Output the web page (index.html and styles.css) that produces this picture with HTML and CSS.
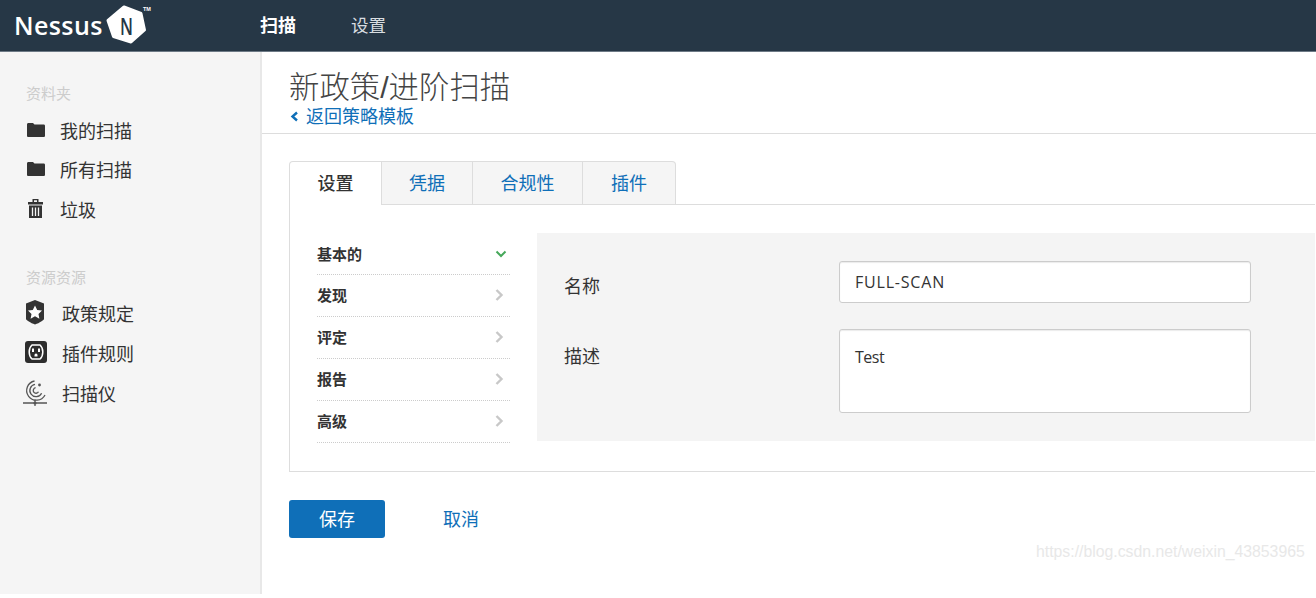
FILE: index.html
```html
<!DOCTYPE html>
<html>
  <head>
    <title>Nessus</title>
    <link rel="stylesheet" href="styles.css">
  </head>
  <body>
    <header class="topbar">
      <div class="brand">
        <span class="brand-name">Nessus</span>
        <svg class="brand-logo" width="44" height="46" viewBox="0 0 44 46">
          <polygon points="21,5 38,11.5 41.5,28 28,40 10.5,34.5 5,18.5" fill="#fff" stroke="#fff" stroke-width="3" stroke-linejoin="round"/>
          <text transform="translate(17 33) scale(.72 1)" class="brand-n">N</text>
          <text x="40" y="9" class="brand-tm">TM</text>
        </svg>
      </div>
      <nav class="topnav">
        <a class="topnav-link active">扫描</a>
        <a class="topnav-link">设置</a>
      </nav>
    </header>
    <div class="layout">
      <aside class="sidebar">
        <h4 class="side-title">资料夹</h4>
        <a class="side-link">
          <svg class="side-icon" viewBox="0 0 20 20"><path d="M1 4.5C1 3.6 1.6 3 2.4 3H7l1.5 1.6h9.2c.8 0 1.3.6 1.3 1.3v9.8c0 .8-.6 1.3-1.3 1.3H2.3C1.6 17 1 16.5 1 15.7Z" fill="#333"/></svg>
          我的扫描
        </a>
        <a class="side-link">
          <svg class="side-icon" viewBox="0 0 20 20"><path d="M1 4.5C1 3.6 1.6 3 2.4 3H7l1.5 1.6h9.2c.8 0 1.3.6 1.3 1.3v9.8c0 .8-.6 1.3-1.3 1.3H2.3C1.6 17 1 16.5 1 15.7Z" fill="#333"/></svg>
          所有扫描
        </a>
        <a class="side-link">
          <svg class="side-icon" viewBox="0 0 20 20"><path d="M6.5 0h6v3H17v2.5H2V3h4.5Zm1.5 1.3V3h3V1.3ZM3 6.5h13V19H3Z" fill="#333" fill-rule="evenodd"/><path d="M6.5 8.5V17M9.500 8.5V17M12.500 8.500V17" stroke="#f5f5f5" stroke-width="1.3"/></svg>
          垃圾
        </a>
        <h4 class="side-title second">资源资源</h4>
        <a class="side-link wide">
          <svg class="side-icon shield" viewBox="0 0 22 26"><path d="M11 1l9 3.500v15.500c0 1-4.500 4-9 5.500C6.500 24 2 21 2 20V4.500Z" fill="#333"/><polygon points="11,6.500 13.200,11 18,11.600 14.500,14.900 15.400,19.700 11,17.300 6.600,19.700 7.500,14.900 4,11.600 8.800,11" fill="#fff"/></svg>
          政策规定
        </a>
        <a class="side-link wide">
          <svg class="side-icon plug" viewBox="0 0 22 22"><rect width="22" height="22" rx="3" fill="#2d2d2d"/><path d="M7 4h8c1.800 1.500 2.800 4 2.800 7s-1 5.500-2.800 7H7c-1.800-1.500-2.800-4-2.800-7s1-5.500 2.800-7Z" fill="#2d2d2d" stroke="#fff" stroke-width="1.500"/><rect x="7" y="7.500" width="2" height="3.500" fill="#fff"/><rect x="13" y="7.500" width="2" height="3.500" fill="#fff"/><path d="M9.500 15.500v-1.500a1.500 1.500 0 0 1 3 0v1.500Z" fill="#fff"/></svg>
          插件规则
        </a>
        <a class="side-link wide">
          <svg class="side-icon scanner" viewBox="0 0 26 26" fill="none" stroke="#555" stroke-width="1.300"><path d="M11.500 1A9.700 9.700 0 1 0 22 15"/><path d="M12 4.400A6.200 6.200 0 1 0 18.600 13.300"/><path d="M12.600 7.700A2.800 2.800 0 1 0 15.500 11.800"/><circle cx="16.500" cy="5" r="1.400" fill="#555" stroke="none"/><path d="M12 19.500V26M0 23h24"/><circle cx="12" cy="23" r="1.600" fill="#555" stroke="none"/></svg>
          扫描仪
        </a>
      </aside>
      <main class="content">
        <div class="page-head">
          <h1 class="page-title">新政策/进阶扫描</h1>
          <a class="back-link"><svg class="back-icon" width="10" height="11" viewBox="0 0 10 11"><path d="M8 1.500L3.500 5.500 8 9.500" fill="none" stroke="#0f6fb8" stroke-width="2.400"/></svg>返回策略模板</a>
        </div>
        <div class="page-body">
          <div class="tabs">
            <a class="tab active">设置</a>
            <a class="tab">凭据</a>
            <a class="tab">合规性</a>
            <a class="tab">插件</a>
          </div>
          <div class="panel">
            <ul class="section-list">
              <li class="section-item open">基本的
                <svg class="chev" width="12" height="10" viewBox="0 0 12 10"><path d="M1.500 2.500L6 7l4.500-4.500" fill="none" stroke="#46a85a" stroke-width="2"/></svg>
              </li>
              <li class="section-item">发现
                <svg class="chev" width="10" height="14" viewBox="0 0 10 14"><path d="M2.500 2L7.500 7l-5 5" fill="none" stroke="#c8c8c8" stroke-width="2.400"/></svg>
              </li>
              <li class="section-item">评定
                <svg class="chev" width="10" height="14" viewBox="0 0 10 14"><path d="M2.500 2L7.500 7l-5 5" fill="none" stroke="#c8c8c8" stroke-width="2.400"/></svg>
              </li>
              <li class="section-item">报告
                <svg class="chev" width="10" height="14" viewBox="0 0 10 14"><path d="M2.500 2L7.500 7l-5 5" fill="none" stroke="#c8c8c8" stroke-width="2.400"/></svg>
              </li>
              <li class="section-item">高级
                <svg class="chev" width="10" height="14" viewBox="0 0 10 14"><path d="M2.500 2L7.500 7l-5 5" fill="none" stroke="#c8c8c8" stroke-width="2.400"/></svg>
              </li>
            </ul>
            <form class="fields">
              <div class="field-row">
                <label class="field-label" for="name">名称</label>
                <input class="field-input" type="text" id="name" value="FULL-SCAN">
              </div>
              <div class="field-row">
                <label class="field-label" for="desc">描述</label>
                <textarea class="field-input area" id="desc">Test</textarea>
              </div>
            </form>
          </div>
          <div class="actions">
            <button class="btn-save" type="button">保存</button>
            <a class="cancel-link">取消</a>
          </div>
        </div>
      </main>
    </div>
    <div class="watermark">https://blog.csdn.net/weixin_43853965</div>
  </body>
</html>
```

FILE: styles.css
```css
* {
  box-sizing: border-box;
}

body {
  margin: 0;
  width: 1316px;
  height: 598px;
  padding-bottom: 4px;
  overflow: hidden;
  display: flex;
  flex-direction: column;
  position: relative;
  background: #fff;
  color: #333;
  font-family: "Open Sans", "Noto Sans CJK SC", sans-serif;
  font-size: 16px;
}

a {
  text-decoration: none;
}

.topbar {
  height: 52px;
  flex: none;
  display: flex;
  align-items: center;
  background: #263746;
  border-bottom: 1px solid #6d7a86;
}

.brand {
  width: 260px;
  padding-left: 14px;
  margin-bottom: 2px;
  display: flex;
  align-items: center;
}

.brand-name {
  width: 89px;
  color: #fff;
  font-family: "Open Sans", sans-serif;
  font-weight: 600;
  font-size: 25px;
  letter-spacing: 0.4px;
}

.brand-logo {
  overflow: visible;
}

.brand-n {
  fill: #263746;
  font-family: "Open Sans", sans-serif;
  font-size: 23px;
  font-weight: 600;
}

.brand-tm {
  fill: #fff;
  font-family: "Liberation Sans", sans-serif;
  font-size: 5.5px;
  font-weight: 700;
}

.topnav {
  display: flex;
  align-items: center;
  gap: 55px;
  margin-bottom: 3px;
}

.topnav-link {
  color: #d8dde1;
  font-size: 17.5px;
}

.topnav-link.active {
  color: #fff;
  font-weight: 700;
  font-size: 18px;
}

.layout {
  flex: 1;
  display: flex;
  min-height: 0;
}

.sidebar {
  width: 262px;
  flex: none;
  padding: 31px 0 0 26px;
  background: #f5f5f5;
  border-right: 2px solid #e8e8e8;
}

.side-title {
  margin: 0 0 7px;
  height: 20px;
  line-height: 20px;
  font-size: 15px;
  font-weight: 400;
  color: #ccc;
}

.side-title.second {
  margin-top: 38px;
  margin-bottom: 6px;
}

.side-link {
  height: 39.5px;
  display: flex;
  align-items: center;
  color: #333;
  font-size: 18px;
}

.side-link.wide {
  height: 40px;
}

.side-icon {
  width: 20px;
  height: 20px;
  margin-right: 14px;
  flex: none;
}

.side-icon.shield {
  width: 22px;
  height: 26px;
  margin: -1px 16px 0 -2px;
}

.side-icon.plug {
  width: 22px;
  height: 22px;
  margin: -2px 15px 0 -1px;
}

.side-icon.scanner {
  width: 26px;
  height: 26px;
  margin: 0 13px 0 -3px;
}

.content {
  flex: 1;
  min-width: 0;
}

.page-head {
  height: 82px;
  padding: 17px 0 0 27px;
  border-bottom: 1px solid #ddd;
}

.page-title {
  margin: 0;
  height: 36px;
  line-height: 36px;
  font-family: "Liberation Sans", "Noto Sans CJK SC", sans-serif;
  font-size: 30.4px;
  font-weight: 300;
  color: #444;
}

.back-link {
  display: flex;
  align-items: center;
  height: 20px;
  color: #0f6fb8;
  font-family: "Liberation Sans", "Noto Sans CJK SC", sans-serif;
  font-size: 18px;
}

.back-icon {
  margin-right: 7px;
  margin-top: 2px;
}

.page-body {
  padding: 27px 0 0 27px;
}

.tabs {
  display: flex;
  height: 44px;
  position: relative;
  z-index: 1;
}

.tab {
  height: 44px;
  width: 91px;
  line-height: 42px;
  text-align: center;
  font-size: 18px;
  color: #0f6fb8;
  background: #f5f5f5;
  border: 1px solid #ddd;
  border-left: 0;
}

.tab:nth-child(3) {
  width: 110px;
}

.tab:nth-child(4) {
  width: 93px;
  border-top-right-radius: 4px;
}

.tab.active {
  width: 93px;
  color: #333;
  background: #fff;
  border-left: 1px solid #ddd;
  border-bottom: 0;
  border-top-left-radius: 4px;
  font-weight: 500;
}

.panel {
  margin-top: -1px;
  width: 1026px;
  height: 268px;
  padding: 28px 0 0 27px;
  display: flex;
  border: 1px solid #ddd;
  border-right: 0;
}

.section-list {
  list-style: none;
  margin: 0;
  padding: 0;
  width: 193px;
  flex: none;
}

.section-item {
  height: 42px;
  padding: 0 6px 2px 0;
  display: flex;
  align-items: center;
  justify-content: space-between;
  font-size: 15px;
  font-weight: 700;
  color: #333;
  border-bottom: 1px dotted #ccc;
}

.section-item.open {
  padding: 0 3px 0 0;
}

.fields {
  margin-left: 27px;
  width: 778px;
  height: 208px;
  padding: 28px 64px 0 27px;
  background: #f4f4f4;
}

.field-row {
  display: flex;
  align-items: flex-start;
  margin-bottom: 26px;
}

.field-label {
  width: 275px;
  flex: none;
  padding-top: 11px;
  font-size: 18px;
  color: #333;
}

.field-row:nth-child(2) .field-label {
  padding-top: 13px;
}

.field-input {
  display: block;
  width: 412px;
  height: 42px;
  padding: 0 15px;
  border: 1px solid #ccc;
  border-radius: 3px;
  background: #fff;
  color: #333;
  font-family: "Open Sans", sans-serif;
  font-size: 16px;
  letter-spacing: 0.8px;
  box-shadow: inset 0 1px 1px rgba(0, 0, 0, 0.08);
}

.field-input.area {
  height: 84px;
  padding-top: 16px;
  line-height: 22px;
  letter-spacing: -0.5px;
  resize: none;
  overflow: hidden;
}

.actions {
  display: flex;
  align-items: center;
  margin-top: 28px;
}

.btn-save {
  width: 96px;
  height: 38px;
  padding: 0 0 3px;
  border: 0;
  border-radius: 3px;
  background: #0f6fb8;
  color: #fff;
  font-family: inherit;
  font-size: 18px;
}

.cancel-link {
  margin-left: 58px;
  margin-bottom: 2px;
  color: #0f6fb8;
  font-size: 18px;
}

.watermark {
  position: absolute;
  left: 1036px;
  top: 543px;
  color: #e8e8e8;
  font-family: "Liberation Sans", sans-serif;
  font-size: 15.8px;
  white-space: nowrap;
}
```
